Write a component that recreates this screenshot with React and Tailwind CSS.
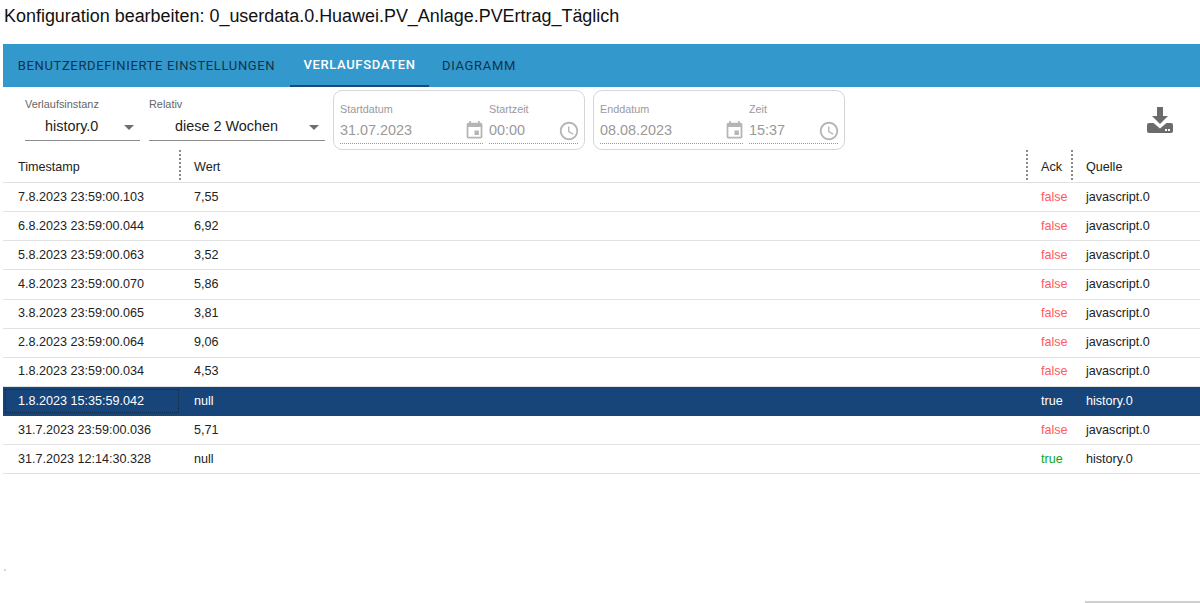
const rows = [
  ['7.8.2023 23:59:00.103', '7,55', 'false', 'javascript.0'],
  ['6.8.2023 23:59:00.044', '6,92', 'false', 'javascript.0'],
  ['5.8.2023 23:59:00.063', '3,52', 'false', 'javascript.0'],
  ['4.8.2023 23:59:00.070', '5,86', 'false', 'javascript.0'],
  ['3.8.2023 23:59:00.065', '3,81', 'false', 'javascript.0'],
  ['2.8.2023 23:59:00.064', '9,06', 'false', 'javascript.0'],
  ['1.8.2023 23:59:00.034', '4,53', 'false', 'javascript.0'],
  ['1.8.2023 15:35:59.042', 'null', 'true', 'history.0', true],
  ['31.7.2023 23:59:00.036', '5,71', 'false', 'javascript.0'],
  ['31.7.2023 12:14:30.328', 'null', 'true', 'history.0'],
]

function Caret() {
  return (
    <svg viewBox="0 0 24 24" className="w-6 h-6 -mr-px fill-[#6f6f6f] shrink-0">
      <path d="M7 10l5 5 5-5z" />
    </svg>
  )
}

function CalendarIcon() {
  return (
    <svg viewBox="0 0 24 24" className="w-[21px] h-[21px] -mr-[2px] fill-[#b5b5b5] shrink-0">
      <path d="M17 12h-5v5h5v-5zM16 1v2H8V1H6v2H5c-1.11 0-1.99.9-1.99 2L3 19c0 1.1.89 2 2 2h14c1.1 0 2-.9 2-2V5c0-1.1-.9-2-2-2h-1V1h-2zm3 18H5V8h14v11z" />
    </svg>
  )
}

function ClockIcon() {
  return (
    <svg viewBox="0 0 24 24" className="w-[22px] h-[22px] -mr-[2px] fill-[#b5b5b5] shrink-0">
      <path d="M11.99 2C6.47 2 2 6.48 2 12s4.47 10 9.99 10C17.52 22 22 17.52 22 12S17.52 2 11.99 2zM12 20c-4.42 0-8-3.58-8-8s3.58-8 8-8 8 3.58 8 8-3.58 8-8 8zm.5-13H11v6l5.25 3.15.75-1.23-4.5-2.67z" />
    </svg>
  )
}

function SelectField({ label, value, width, pad }) {
  return (
    <div className={`${width} shrink-0`}>
      <div className="text-[10.9px] leading-[13px] text-[#666]">{label}</div>
      <div className="flex items-center justify-between h-[27px] mt-[3px] border-b border-[#8c8c8c]">
        <span className={`${pad} text-[14.4px] text-[#222]`}>{value}</span>
        <Caret />
      </div>
    </div>
  )
}

function DateGroup({ dateLabel, date, timeLabel, time }) {
  return (
    <div className="w-[252px] h-[60px] shrink-0 flex pl-[6px] pr-[6px] pt-[12px] border border-[#d6d6d6] rounded-[9px] text-[#9a9a9a]">
      <div className="w-[143px] shrink-0">
        <div className="text-[10.8px] leading-[13px]">{dateLabel}</div>
        <div className="flex items-center justify-between h-[26px] mt-[2px] border-b border-dotted border-[#9a9a9a]">
          <span className="text-[14.4px]">{date}</span>
          <CalendarIcon />
        </div>
      </div>
      <div className="ml-[6px] flex-1">
        <div className="text-[10.8px] leading-[13px]">{timeLabel}</div>
        <div className="flex items-center justify-between h-[26px] mt-[2px] border-b border-dotted border-[#9a9a9a]">
          <span className="text-[14.4px]">{time}</span>
          <ClockIcon />
        </div>
      </div>
    </div>
  )
}

function Divider() {
  return <span className="h-[30px] mb-1 -mr-[2px] border-l-2 border-dotted border-[#8a8a8a]" />
}

function ackColor(row) {
  if (row[4]) return 'text-white'
  return row[2] === 'true' ? 'text-[#0ea51a]' : 'text-[#ff5a5f]'
}

export default function App() {
  return (
    <div className="w-[1200px] h-[603px] overflow-hidden bg-white text-[#222] font-['Liberation_Sans',Arial,sans-serif]">
      <h1 className="h-[44px] pl-1 pt-[5px] text-[17.95px] leading-[22px] font-normal text-[#111]">
        Konfiguration bearbeiten: 0_userdata.0.Huawei.PV_Anlage.PVErtrag_Täglich
      </h1>

      <div className="ml-[3px] flex h-[43px] bg-[#3399cc] text-[13px] tracking-[0.65px] font-['Roboto',sans-serif]">
        <div className="w-[287px] flex items-center justify-center text-[#12324a]">BENUTZERDEFINIERTE EINSTELLUNGEN</div>
        <div className="w-[139px] flex items-center justify-center text-white border-b-2 border-[#164a80] font-medium">VERLAUFSDATEN</div>
        <div className="w-[100px] flex items-center justify-center text-[#12324a]">DIAGRAMM</div>
      </div>

      <div className="h-[60px] mt-[3px] flex items-start">
        <div className="flex gap-[9px] pl-[25px] pr-2 pt-[8px]">
          <SelectField label="Verlaufsinstanz" value="history.0" width="w-[115px]" pad="pl-5" />
          <SelectField label="Relativ" value="diese 2 Wochen" width="w-[176px]" pad="pl-[26px]" />
        </div>
        <DateGroup dateLabel="Startdatum" date="31.07.2023" timeLabel="Startzeit" time="00:00" />
        <div className="w-2 shrink-0" />
        <DateGroup dateLabel="Enddatum" date="08.08.2023" timeLabel="Zeit" time="15:37" />
        <div className="flex-1 flex justify-end pr-[27px] pt-[17px]">
          <svg viewBox="0 0 26 26" className="w-[26px] h-[26px] fill-[#6b6b6b]">
            <path d="M10 0h6v9h5l-8 8-8-8h5z" />
            <path fillRule="evenodd" d="M2 16h4.500l6.500 5.500 6.500-5.500H24a2 2 0 0 1 2 2v6a2 2 0 0 1-2 2H2a2 2 0 0 1-2-2v-6a2 2 0 0 1 2-2z M18 22h2v2h-2z M21 22h2v2h-2z" />
          </svg>
        </div>
      </div>

      <div className="ml-[3px] text-[12.6px]">
        <div className="grid grid-cols-[176px_847px_45px_1fr] h-[33px] items-center border-b border-[#e2e2e2] text-[#222]">
          <div className="flex items-center justify-between pl-[15px]">Timestamp<Divider /></div>
          <div className="flex items-center justify-between pl-[15px]">Wert<Divider /></div>
          <div className="flex items-center justify-between pl-[15px]">Ack<Divider /></div>
          <div className="pl-[15px]">Quelle</div>
        </div>
        {rows.map((row) => (
          <div
            key={row[0]}
            className={`grid grid-cols-[176px_847px_45px_1fr] h-[29.15px] items-center border-b ${row[4] ? 'bg-[#17457a] text-white border-[#17457a]' : 'border-[#e2e2e2]'}`}
          >
            <div className={row[4] ? 'ml-[2px] pl-[12px] h-[24px] flex items-center border border-dotted border-[#0d2b4d]' : 'pl-[15px]'}>{row[0]}</div>
            <div className="pl-[15px]">{row[1]}</div>
            <div className={`pl-[15px] ${ackColor(row)}`}>{row[2]}</div>
            <div className="pl-[15px]">{row[3]}</div>
          </div>
        ))}
      </div>

      <div className="mt-[95px] ml-1 w-[2px] h-[2px] bg-[#d5d5d5]" />
      <div className="mt-[30px] ml-[1085px] h-[2px] bg-[#cfcfcf]" />
    </div>
  )
}
